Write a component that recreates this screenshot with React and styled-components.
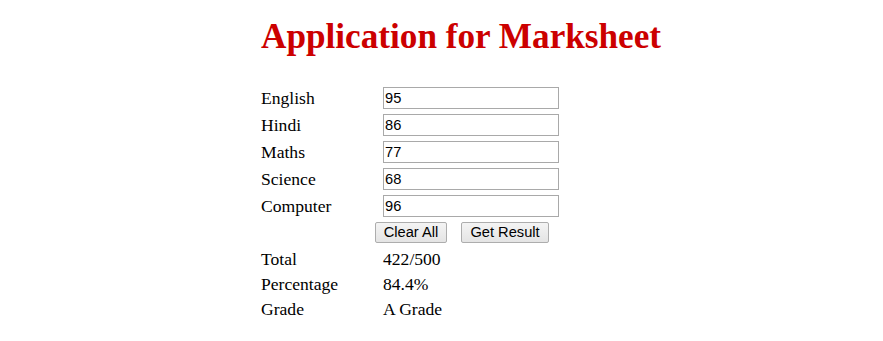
import React, { useState } from 'react';
import styled, { createGlobalStyle } from 'styled-components';

const GlobalStyle = createGlobalStyle`
  html, body {
    margin: 0;
    padding: 0;
    background: #fff;
  }
  body {
    font-family: "Liberation Serif", "Times New Roman", serif;
    font-size: 17.6px;
    color: #000;
  }
`;

const Page = styled.div`
  padding-left: 261px;
`;

const Title = styled.h1`
  margin: 0;
  padding-top: 17px;
  font-family: "Liberation Serif", "Times New Roman", serif;
  font-size: 35.2px;
  line-height: 40px;
  font-weight: bold;
  color: #cc0000;
`;

const Form = styled.div`
  margin-top: 27px;
  display: flex;
  flex-direction: column;
`;

const Row = styled.div`
  display: grid;
  grid-template-columns: 122px auto;
  align-items: center;
  height: ${(p) => p.$height || 27}px;
`;

const Label = styled.span`
  line-height: 20px;
`;

const Value = styled.span`
  line-height: 20px;
`;

const Input = styled.input`
  box-sizing: border-box;
  width: 176px;
  height: 22px;
  margin: 0;
  padding: 0 1px;
  border: 1px solid #a9a9a9;
  background: #fff;
  font-family: "Liberation Sans", Arial, sans-serif;
  font-size: 14.67px;
  color: #000;
  outline: none;
`;

const Buttons = styled.div`
  display: flex;
  gap: 14px;
  align-items: center;
  height: 27px;
  padding-left: 114px;
`;

const Button = styled.button`
  box-sizing: border-box;
  height: 21px;
  width: ${(p) => p.$width}px;
  margin: 0;
  padding: 0;
  border: 1px solid #adadad;
  border-radius: 2px;
  background: linear-gradient(#f4f4f4, #e4e4e4);
  font-family: "Liberation Sans", Arial, sans-serif;
  font-size: 14.67px;
  line-height: 19px;
  color: #000;
  cursor: pointer;
`;

const subjects = [
  ['English', '95'],
  ['Hindi', '86'],
  ['Maths', '77'],
  ['Science', '68'],
  ['Computer', '96'],
];

export default function App() {
  const [marks, setMarks] = useState(subjects.map((s) => s[1]));

  const setMark = (i, v) => {
    const next = [...marks];
    next[i] = v;
    setMarks(next);
  };

  return (
    <Page>
      <GlobalStyle />
      <Title>Application for Marksheet</Title>
      <Form>
        {subjects.map(([name], i) => (
          <Row key={name}>
            <Label>{name}</Label>
            <Input value={marks[i]} onChange={(e) => setMark(i, e.target.value)} />
          </Row>
        ))}
        <Buttons>
          <Button $width={72} onClick={() => setMarks(subjects.map(() => ''))}>Clear All</Button>
          <Button $width={88}>Get Result</Button>
        </Buttons>
        <Row $height={25}>
          <Label>Total</Label>
          <Value>422/500</Value>
        </Row>
        <Row $height={25}>
          <Label>Percentage</Label>
          <Value>84.4%</Value>
        </Row>
        <Row $height={25}>
          <Label>Grade</Label>
          <Value>A Grade</Value>
        </Row>
      </Form>
    </Page>
  );
}
